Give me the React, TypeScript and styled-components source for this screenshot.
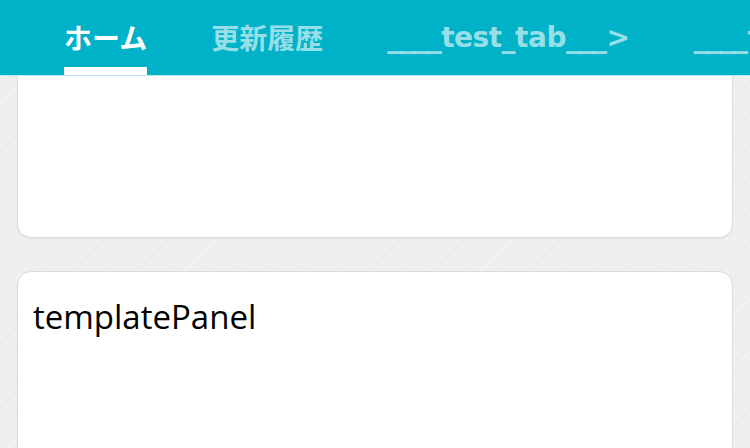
import React from "react";
import styled, { createGlobalStyle } from "styled-components";

const Global = createGlobalStyle`
  html, body { margin: 0; padding: 0; }
  body {
    font-family: "Open Sans", "Noto Sans CJK JP", sans-serif;
    background-color: #eeeeee;
    background-image: repeating-linear-gradient(
      135deg,
      #eeeeee 0px,
      #eeeeee 6px,
      #f2f2f2 6px,
      #f2f2f2 7.5px
    );
    overflow: hidden;
  }
`;

const Page = styled.div`
  width: 750px;
  height: 448px;
  display: flex;
  flex-direction: column;
  overflow: hidden;
`;

const Header = styled.nav`
  flex: none;
  height: 75px;
  background: #00b2c8;
  border-bottom: 1px solid #b8e9f0;
  display: flex;
  align-items: stretch;
  gap: 64px;
  padding-left: 64px;
  overflow: hidden;
  white-space: nowrap;
`;

const Tab = styled.div<{ $active?: boolean; $latin?: boolean }>`
  flex: none;
  box-sizing: border-box;
  height: 75px;
  display: flex;
  align-items: center;
  padding-top: 7px;
  border-bottom: 8px solid ${(p) => (p.$active ? "#ffffff" : "transparent")};
  color: ${(p) => (p.$active ? "#ffffff" : "rgba(255,255,255,0.6)")};
  font-family: "DejaVu Sans", "Noto Sans CJK JP", sans-serif;
  font-weight: 700;
  font-size: 28px;
  letter-spacing: ${(p) => (p.$latin ? "-0.5px" : "0")};
`;

const Main = styled.main`
  flex: 1;
  overflow: hidden;
  padding: 0 17px;
  display: flex;
  flex-direction: column;
  gap: 33px;
`;

const Card = styled.section<{ $height: number; $offset?: number }>`
  flex: none;
  box-sizing: border-box;
  height: ${(p) => p.$height}px;
  margin-top: ${(p) => p.$offset ?? 0}px;
  background: #ffffff;
  border: 1.5px solid #dcdcdc;
  border-radius: 14px;
  box-shadow: 0 1px 2px rgba(0, 0, 0, 0.05);
  padding: 21px 15px;
`;

const PanelTitle = styled.div`
  font-family: "Open Sans", "Noto Sans CJK JP", sans-serif;
  font-size: 33px;
  line-height: 48px;
  color: #000000;
`;

export default function App() {
  return (
    <>
      <Global />
      <Page>
        <Header>
          <Tab $active>ホーム</Tab>
          <Tab>更新履歴</Tab>
          <Tab $latin>____test_tab___&gt;</Tab>
          <Tab $latin>____test_tab___&gt;</Tab>
        </Header>
        <Main>
          <Card $height={200} $offset={-38} />
          <Card $height={260}>
            <PanelTitle>templatePanel</PanelTitle>
          </Card>
        </Main>
      </Page>
    </>
  );
}
